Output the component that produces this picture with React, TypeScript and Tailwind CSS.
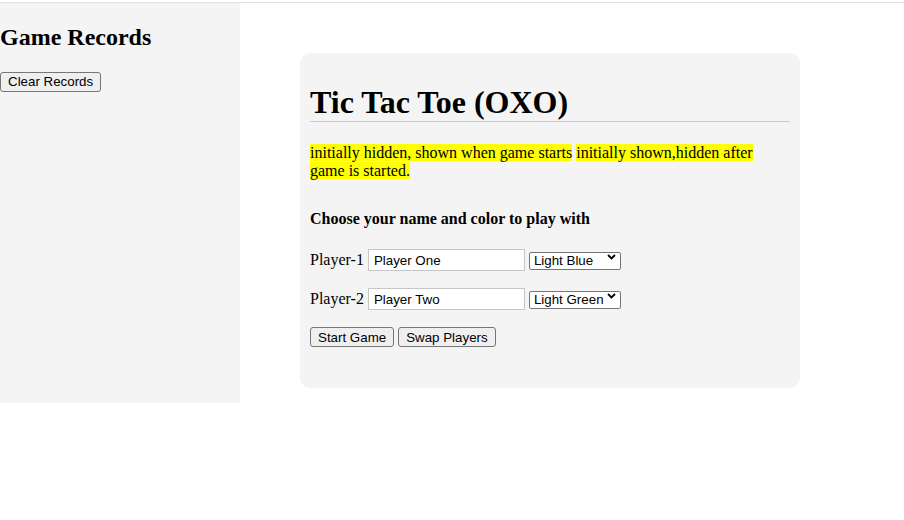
import React from 'react'

const serif = "font-['Liberation_Serif',_'Times_New_Roman',serif]"

function Btn({ children }: { children: React.ReactNode }) {
  return (
    <button className="h-[20px] px-[7px] bg-[#efefef] border border-[#767676] rounded-[3px] text-[13.33px] leading-[normal] font-['Liberation_Sans',Arial,sans-serif] text-black">
      {children}
    </button>
  )
}

function PlayerRow({ label, name, color, className }: { label: string; name: string; color: string; className: string }) {
  return (
    <div className={`flex items-center h-[22px] ${className}`}>
      <span className="text-[16px] leading-[normal]">{label}</span>
      <input
        defaultValue={name}
        className="ml-[4px] w-[157px] h-[22px] pl-[5px] bg-white border border-[#c6c6c6] text-[13.33px] font-['Liberation_Sans',Arial,sans-serif] text-black outline-none"
      />
      <div className="relative ml-[4px]">
        <select
          defaultValue={color}
          className="appearance-none w-[92px] h-[18px] pl-[4px] bg-white border border-[#767676] rounded-[2px] text-[13.33px] leading-[normal] font-['Liberation_Sans',Arial,sans-serif] text-black"
        >
          <option>Light Blue</option>
          <option>Light Green</option>
          <option>Light Pink</option>
          <option>Light Yellow</option>
        </select>
        <svg className="absolute right-[5px] top-[6px] pointer-events-none" width="9" height="6" viewBox="0 0 9 6">
          <path d="M1 1 L4.5 4.5 L8 1" fill="none" stroke="black" strokeWidth="1.8" />
        </svg>
      </div>
    </div>
  )
}

export default function App() {
  return (
    <div className={`${serif} text-black bg-white min-h-[520px]`}>
      <div className="pt-[2px]">
        <div className="h-px bg-[#e0e0e0]" />
      </div>
      <div className="flex">
        <aside className="w-[240px] h-[400px] bg-[#f4f4f4]">
          <h2 className="mt-[21px] text-[24px] font-bold leading-[normal]">Game Records</h2>
          <div className="mt-[18px]">
            <Btn>Clear Records</Btn>
          </div>
        </aside>

        <main className="ml-[60px] mt-[50px]">
          <div className="w-[500px] bg-[#f4f4f4] rounded-[10px] px-[10px] pt-[10px] pb-[41px]">
            <h1 className="mt-[21px] text-[32px] font-bold leading-[normal] border-b border-[#cccccc]">
              Tic Tac Toe (OXO)
            </h1>
            <p className="mt-[22px] text-[16px] leading-[normal]">
              <span className="bg-[#ffff00]">initially hidden, shown when game starts</span>{' '}
              <span className="bg-[#ffff00]">initially shown,hidden after game is started.</span>
            </p>
            <h4 className="mt-[30px] text-[16px] font-bold leading-[normal]">
              Choose your name and color to play with
            </h4>
            <PlayerRow label="Player-1" name="Player One" color="Light Blue" className="mt-[21px]" />
            <PlayerRow label="Player-2" name="Player Two" color="Light Green" className="mt-[17px]" />
            <div className="mt-[17px] flex gap-[4px]">
              <Btn>Start Game</Btn>
              <Btn>Swap Players</Btn>
            </div>
          </div>
        </main>
      </div>
    </div>
  )
}
